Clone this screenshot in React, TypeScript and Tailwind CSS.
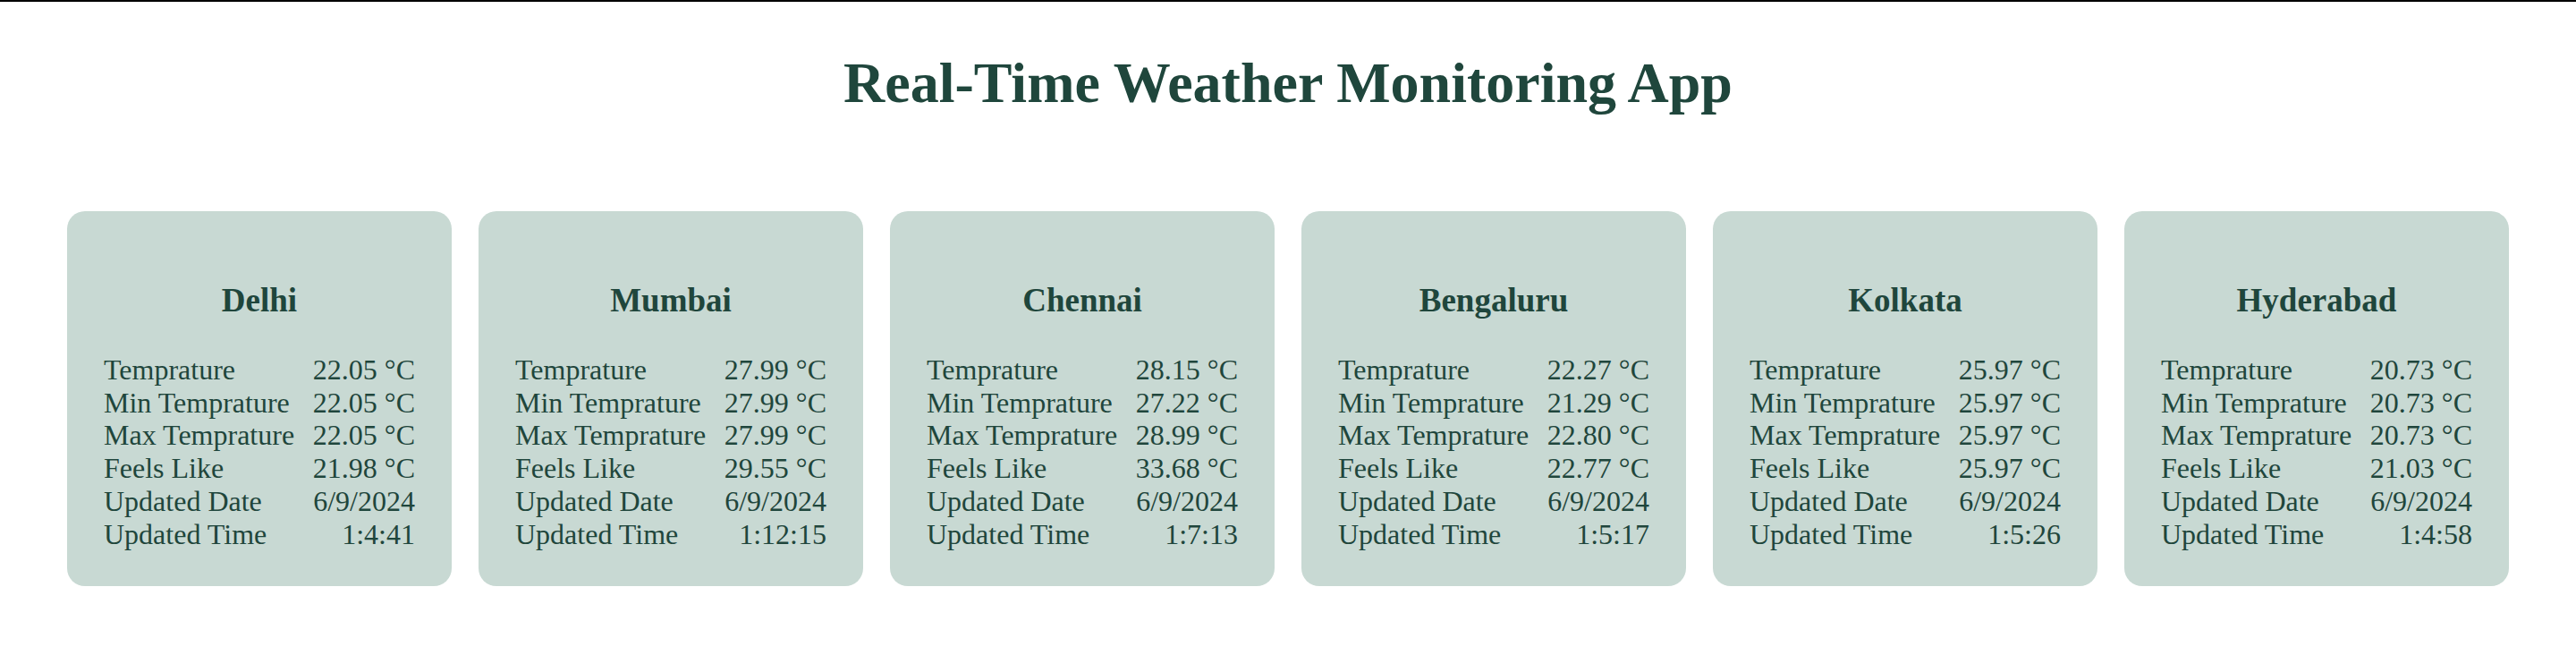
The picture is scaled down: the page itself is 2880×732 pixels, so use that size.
const cities = [
  { name: 'Delhi', temp: '22.05', min: '22.05', max: '22.05', feels: '21.98', date: '6/9/2024', time: '1:4:41' },
  { name: 'Mumbai', temp: '27.99', min: '27.99', max: '27.99', feels: '29.55', date: '6/9/2024', time: '1:12:15' },
  { name: 'Chennai', temp: '28.15', min: '27.22', max: '28.99', feels: '33.68', date: '6/9/2024', time: '1:7:13' },
  { name: 'Bengaluru', temp: '22.27', min: '21.29', max: '22.80', feels: '22.77', date: '6/9/2024', time: '1:5:17' },
  { name: 'Kolkata', temp: '25.97', min: '25.97', max: '25.97', feels: '25.97', date: '6/9/2024', time: '1:5:26' },
  { name: 'Hyderabad', temp: '20.73', min: '20.73', max: '20.73', feels: '21.03', date: '6/9/2024', time: '1:4:58' },
];

type City = (typeof cities)[number];

function WeatherCard({ city }: { city: City }) {
  const rows: [string, string][] = [
    ['Temprature', `${city.temp} °C`],
    ['Min Temprature', `${city.min} °C`],
    ['Max Temprature', `${city.max} °C`],
    ['Feels Like', `${city.feels} °C`],
    ['Updated Date', city.date],
    ['Updated Time', city.time],
  ];

  return (
    <div className="w-[430px] h-[419px] shrink-0 rounded-[20px] bg-[#c8d9d3] pt-[78px] px-[41px]">
      <h3 className="text-center text-[37px] leading-[43px] font-bold">{city.name}</h3>
      <div className="mt-[38px] grid grid-cols-[1fr_auto] text-[32px] leading-[36.7px]">
        {rows.map(([label, value]) => (
          <div key={label} className="contents">
            <span>{label}</span>
            <span className="text-right">{value}</span>
          </div>
        ))}
      </div>
    </div>
  );
}

export default function App() {
  return (
    <div className="min-h-[732px] bg-white text-[#1f463c] font-['Liberation_Serif',serif]">
      <div className="h-[2px] bg-black" />
      <h1 className="mt-[54px] text-center text-[64px] leading-[74px] font-bold">
        Real-Time Weather Monitoring App
      </h1>
      <div className="mt-[106px] flex justify-center gap-[30px]">
        {cities.map((c) => (
          <WeatherCard key={c.name} city={c} />
        ))}
      </div>
    </div>
  );
}
